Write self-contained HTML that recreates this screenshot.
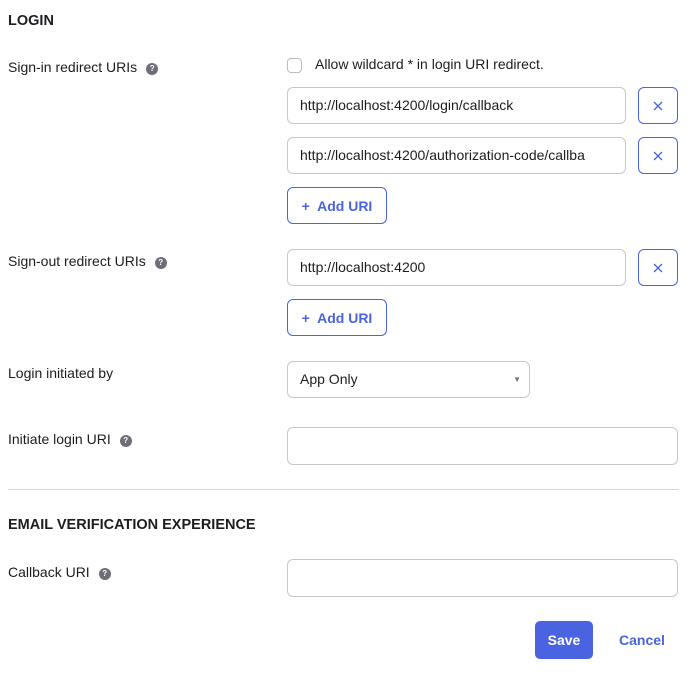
<!DOCTYPE html>
<html><head><style>
body{margin:0;width:691px;height:675px;background:#fff;font-family:"Liberation Sans",sans-serif;color:#1d1d21;position:relative;overflow:hidden}
.a{position:absolute}
h{position:absolute;font-weight:bold;font-size:14.5px;left:8px}
.l{position:absolute;left:8px;font-size:14px;line-height:16px}
.q{display:inline-block;width:12px;height:12px;border-radius:50%;background:#6e6e78;color:#fff;font-size:8px;font-weight:bold;text-align:center;line-height:12px;vertical-align:1px;margin-left:9px}
.in{position:absolute;left:287px;height:37px;border:1px solid #c8c8cc;border-radius:6px;box-sizing:border-box;font-size:14px;line-height:35px;padding-left:12px;overflow:hidden;white-space:nowrap;color:#1d1d21}
.x{position:absolute;left:638px;width:40px;height:37px;border:1px solid #4a63e0;border-radius:6px;box-sizing:border-box}
.x svg{position:absolute;left:14px;top:13px}
.add{position:absolute;left:287px;width:100px;height:37px;border:1px solid #4a63e0;border-radius:6px;box-sizing:border-box;color:#4a63e0;font-weight:bold;font-size:14px;line-height:36px;text-align:center}
</style></head><body>
<h style="top:13px">LOGIN</h>
<div class="l" style="top:59px">Sign-in redirect URIs<span class="q">?</span></div>
<div class="a" style="left:287px;top:58px;width:15px;height:15px;border:1px solid #bbb;border-radius:4px;box-sizing:border-box"></div>
<div class="a" style="left:315px;top:56px;font-size:14px">Allow wildcard * in login URI redirect.</div>
<div class="in" style="top:87px;width:339px">http://localhost:4200/login/callback</div>
<div class="x" style="top:87px"><svg width="10" height="10"><path d="M1 1L9 9M9 1L1 9" stroke="#4a63e0" stroke-width="1.3"/></svg></div>
<div class="in" style="top:137px;width:339px;padding-right:10px">http://localhost:4200/authorization-code/callba</div>
<div class="x" style="top:137px"><svg width="10" height="10"><path d="M1 1L9 9M9 1L1 9" stroke="#4a63e0" stroke-width="1.3"/></svg></div>
<div class="add" style="top:187px">+&nbsp; Add URI</div>
<div class="l" style="top:253px">Sign-out redirect URIs<span class="q">?</span></div>
<div class="in" style="top:249px;width:339px">http://localhost:4200</div>
<div class="x" style="top:249px"><svg width="10" height="10"><path d="M1 1L9 9M9 1L1 9" stroke="#4a63e0" stroke-width="1.3"/></svg></div>
<div class="add" style="top:299px">+&nbsp; Add URI</div>
<div class="l" style="top:365px">Login initiated by</div>
<div class="in" style="top:361px;width:243px">App Only<span class="a" style="right:8px;top:0;font-size:8px;color:#777">▼</span></div>
<div class="l" style="top:431px">Initiate login URI<span class="q">?</span></div>
<div class="in" style="top:427px;width:391px;height:38px"></div>
<div class="a" style="left:8px;top:489px;width:671px;height:1px;background:#d5d5d8"></div>
<h style="top:517px">EMAIL VERIFICATION EXPERIENCE</h>
<div class="l" style="top:564px">Callback URI<span class="q">?</span></div>
<div class="in" style="top:559px;width:391px;height:38px"></div>
<div class="a" style="left:535px;top:621px;width:58px;height:38px;background:#4a63e0;border-radius:5px;color:#fff;font-weight:bold;font-size:14px;text-align:center;line-height:38px">Save</div>
<div class="a" style="left:619px;top:632px;color:#4a63e0;font-weight:bold;font-size:14px">Cancel</div>
</body></html>
